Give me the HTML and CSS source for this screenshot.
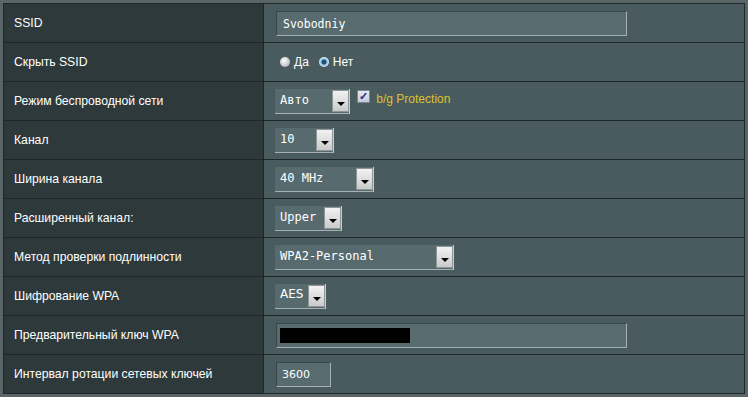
FILE: index.html
```html
<!DOCTYPE html>
<html lang="ru">
<head>
    <meta charset="UTF-8">
    <title>Беспроводная сеть</title>
    <link rel="stylesheet" href="styles.css">
</head>
<body>
    <table class="settings">
        <tr>
            <th>SSID</th>
            <td><span class="field wide">Svobodniy</span></td>
        </tr>
        <tr>
            <th>Скрыть SSID</th>
            <td>
                <div class="radios">
                    <span class="radio"></span><span class="opt">Да</span>
                    <span class="radio on"></span><span class="opt">Нет</span>
                </div>
            </td>
        </tr>
        <tr>
            <th>Режим беспроводной сети</th>
            <td>
                <span class="select w75"><span class="val">Авто</span><span class="arrow"></span></span>
                <span class="check">&#10003;</span><span class="note">b/g Protection</span>
            </td>
        </tr>
        <tr>
            <th>Канал</th>
            <td><span class="select w59"><span class="val">10</span><span class="arrow"></span></span></td>
        </tr>
        <tr>
            <th>Ширина канала</th>
            <td><span class="select w99"><span class="val">40 MHz</span><span class="arrow"></span></span></td>
        </tr>
        <tr>
            <th>Расширенный канал:</th>
            <td><span class="select w67"><span class="val">Upper</span><span class="arrow"></span></span></td>
        </tr>
        <tr>
            <th>Метод проверки подлинности</th>
            <td><span class="select w179"><span class="val">WPA2-Personal</span><span class="arrow"></span></span></td>
        </tr>
        <tr>
            <th>Шифрование WPA</th>
            <td><span class="select w51"><span class="val sans">AES</span><span class="arrow"></span></span></td>
        </tr>
        <tr>
            <th>Предварительный ключ WPA</th>
            <td><span class="field wide"><span class="hidden-key"></span></span></td>
        </tr>
        <tr>
            <th>Интервал ротации сетевых ключей</th>
            <td><span class="field short sans">3600</span></td>
        </tr>
    </table>
</body>
</html>
```

FILE: styles.css
```css
body {
    margin: 0;
    padding: 3px 3px 0 3px;
    background-color: #5a6568;
    font-family: "Liberation Sans", Arial, sans-serif;
    font-size: 12px;
    color: #fff;
}

.settings {
    width: 742px;
    border-collapse: collapse;
    border: 1px solid #1d2729;
}

.settings tr {
    height: 39px;
}

.settings th,
.settings td {
    border: 1px solid #1d2729;
    padding: 0;
    vertical-align: middle;
}

.settings th {
    width: 249px;
    padding-left: 10px;
    text-align: left;
    font-weight: normal;
    font-size: 12.2px;
    background-color: #2e393b;
}

.settings td {
    padding-left: 11px;
    background-color: #4a5b5f;
}

.field {
    display: inline-block;
    box-sizing: border-box;
    height: 25px;
    padding: 5px 6px 0 6px;
    background-color: #586c70;
    border: 1px solid #3a4749;
    border-right-color: #a4b0b2;
    border-bottom-color: #a4b0b2;
    font-family: "DejaVu Sans Mono", monospace;
    font-size: 11.5px;
    vertical-align: middle;
}

.wide {
    width: 351px;
    margin-left: 1px;
}

.short {
    width: 55px;
    margin-left: 1px;
    padding-left: 5px;
}

.sans {
    font-family: "DejaVu Sans", sans-serif;
    font-size: 11px;
}

.hidden-key {
    display: block;
    width: 130px;
    height: 15px;
    margin: -1px 0 0 -3px;
    background-color: #000;
}

.radios {
    display: flex;
    align-items: center;
}

.radio {
    width: 10px;
    height: 10px;
    border-radius: 50%;
    background: radial-gradient(circle at 40% 35%, #fff, #bcc0c1 70%, #8f9596);
    margin: 0 4px 0 5px;
}

.radio.on {
    background: radial-gradient(circle, #1d4f78 0 2px, #8fc3e4 3px, #d6e8f2 5px);
    margin-left: 10px;
}

.select {
    display: inline-flex;
    box-sizing: border-box;
    height: 25px;
    align-items: stretch;
    justify-content: space-between;
    background-color: #576b6f;
    border-bottom: 1px solid #a4b0b2;
    border-right: 1px solid #c6cfd0;
    vertical-align: middle;
}

.select .val {
    padding: 4px 0 0 5px;
    font-family: "DejaVu Sans Mono", monospace;
    font-size: 12px;
}

.select .val.sans {
    font-family: "DejaVu Sans", sans-serif;
    font-size: 12px;
    padding-top: 3px;
}

.arrow {
    position: relative;
    width: 15px;
    margin: 1px 0 1px 0;
    background: linear-gradient(#f2f2f2, #c9cbcb);
    border: 1px solid #8d9596;
}

.arrow::after {
    content: "";
    position: absolute;
    left: 4px;
    top: 11px;
    border-left: 4px solid transparent;
    border-right: 4px solid transparent;
    border-top: 4px solid #000;
}

.w75 { width: 75px; }
.w59 { width: 59px; }
.w99 { width: 99px; }
.w67 { width: 67px; }
.w179 { width: 179px; }
.w51 { width: 51px; }

.check {
    display: inline-block;
    box-sizing: border-box;
    width: 13px;
    height: 13px;
    margin: 0 6px 0 4px;
    background: linear-gradient(#e8e8f0, #c4c8d8);
    border: 1px solid #7a8894;
    color: #2a2a8a;
    font-size: 11px;
    line-height: 11px;
    text-align: center;
    font-weight: bold;
    vertical-align: 4px;
}

.note {
    color: #dcc22a;
    vertical-align: 2px;
}
```
